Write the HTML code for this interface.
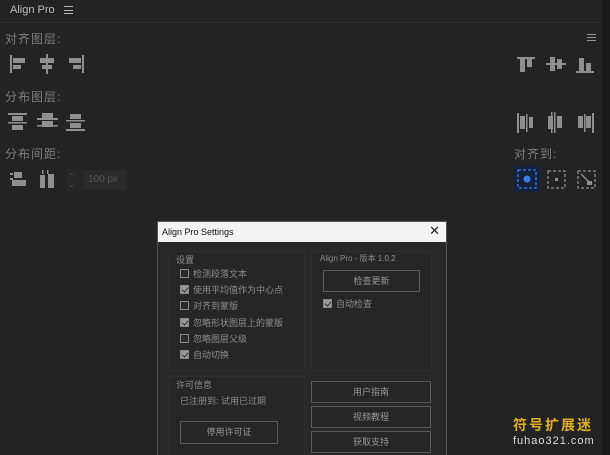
<!DOCTYPE html>
<html style="overflow:hidden;height:455px"><head><meta charset="utf-8"><style>
*{margin:0;padding:0;box-sizing:border-box}
body{width:610px;height:455px;background:#232323;position:relative;overflow:hidden;font-family:"Liberation Sans","Noto Sans CJK SC",sans-serif;color:#8a8a8a}
.a{position:absolute}
.lbl{font-size:12px;color:#7e7e7e;letter-spacing:1px}
svg{position:absolute}
.dlg{left:157px;top:221px;width:290px;height:234px;background:#282828;border:1px solid #555;border-bottom:none;overflow:hidden}
.tb{left:0;top:0;width:288px;height:20px;background:#f3f3f3;color:#111;font-size:9px;padding:5px 4px}
.pn{position:absolute;background:#262626;border:1px solid #2e2e2e}
.s{font-size:9px;color:#8d8d8d;position:absolute}
.cb{position:absolute;width:9px;height:9px;border:1px solid #888;background:#2a2a2a}
.cb.on{background:#9a9a9a}
.cb.on:after{content:"";position:absolute;left:2px;top:0px;width:3px;height:5px;border:solid #333;border-width:0 1.5px 1.5px 0;transform:rotate(40deg)}
.btn{position:absolute;border:1px solid #5a5a5a;background:#262626;font-size:9px;color:#999;text-align:center}
</style></head><body>
<div class="a" style="left:10px;top:4px;font-size:11px;color:#bdbdbd">Align Pro</div>
<div class="a" style="left:64px;top:6px;width:9px;height:8px;border-top:1.5px solid #bbb;border-bottom:1.5px solid #bbb"></div>
<div class="a" style="left:64px;top:9.5px;width:9px;height:1.5px;background:#bbb"></div>
<div class="a" style="left:0;top:22px;width:602px;height:1px;background:#2e2e2e"></div>
<div class="a" style="left:602px;top:0;width:8px;height:455px;background:#1b1b1b"></div>
<div class="a" style="left:587px;top:34px;width:9px;height:7px;border-top:1px solid #999;border-bottom:1px solid #999"></div>
<div class="a" style="left:587px;top:37px;width:9px;height:1px;background:#999"></div>

<div class="a lbl" style="left:5px;top:30px">对齐图层:</div>
<div class="a lbl" style="left:5px;top:88px">分布图层:</div>
<div class="a lbl" style="left:5px;top:145px">分布间距:</div>
<div class="a lbl" style="left:514px;top:145px">对齐到:</div>

<svg width="610" height="455" style="left:0;top:0" fill="#8f8f8f">
<rect x="10" y="55" width="2" height="18"/><rect x="13" y="58" width="12" height="5"/><rect x="13" y="65" width="8" height="4"/>
<rect x="46" y="54" width="2" height="20"/><rect x="40" y="58" width="14" height="5"/><rect x="42" y="65" width="10" height="4"/>
<rect x="82" y="55" width="2" height="18"/><rect x="69" y="58" width="12" height="5"/><rect x="73" y="65" width="8" height="4"/>
<rect x="517" y="57" width="18" height="2"/><rect x="520" y="59" width="5" height="13"/><rect x="527" y="59" width="5" height="8"/>
<rect x="546" y="63" width="20" height="2"/><rect x="550" y="57" width="5" height="14"/><rect x="557" y="59" width="5" height="10"/>
<rect x="576" y="71" width="18" height="2"/><rect x="579" y="58" width="5" height="13"/><rect x="586" y="63" width="5" height="8"/>
<rect x="8" y="113" width="19" height="2"/><rect x="12" y="116" width="11" height="5"/><rect x="8" y="122" width="19" height="1.5"/><rect x="12" y="125" width="11" height="5"/>
<rect x="37" y="118" width="21" height="2"/><rect x="42" y="113" width="11" height="5"/><rect x="42" y="121" width="11" height="6"/><rect x="37" y="125" width="21" height="1.5"/>
<rect x="70" y="114" width="11" height="5"/><rect x="66" y="120" width="19" height="1.5"/><rect x="70" y="123" width="11" height="5"/><rect x="66" y="129" width="19" height="2"/>
<rect x="517" y="113" width="2" height="20"/><rect x="520" y="116" width="5" height="13"/><rect x="526" y="114" width="1.5" height="18"/><rect x="529" y="117" width="4" height="11"/>
<rect x="548" y="116" width="5" height="13"/><rect x="554" y="112" width="1.5" height="21"/><rect x="557" y="116" width="5" height="12"/><rect x="551" y="112" width="1.5" height="21"/>
<rect x="578" y="116" width="5" height="12"/><rect x="584" y="114" width="1.5" height="18"/><rect x="586" y="116" width="5" height="12"/><rect x="592" y="113" width="2" height="20"/>
<rect x="10" y="173" width="3" height="2"/><rect x="10" y="178" width="3" height="2"/><rect x="14" y="172" width="8" height="6"/><rect x="12" y="180" width="14" height="6"/>
<rect x="40" y="175" width="5" height="13"/><rect x="48" y="174" width="6" height="14"/><rect x="42" y="170" width="1.5" height="4"/><rect x="47" y="170" width="1.5" height="4"/>
</svg>
<div class="a" style="left:66px;top:169px;width:16px;height:22px;background:#262626"></div>
<div class="a" style="left:68px;top:172px;font-size:8px;color:#555">⌃</div>
<div class="a" style="left:68px;top:180px;font-size:8px;color:#555">⌄</div>
<div class="a" style="left:83px;top:170px;width:44px;height:20px;background:#2a2a2a;font-size:10px;color:#555;padding:4px 5px">100 px</div>

<div class="a" style="left:514px;top:166px;width:26px;height:26px;background:#14213a"></div>
<svg width="610" height="455" style="left:0;top:0" fill="none" stroke-width="1.3">
<rect x="518" y="170" width="18" height="18" stroke="#3b7de8" stroke-dasharray="3 2"/><circle cx="527" cy="179" r="3.5" fill="#3b7de8" stroke="none"/>
<rect x="548" y="171" width="17" height="17" stroke="#8f8f8f" stroke-dasharray="3 2"/><rect x="555" y="178" width="3" height="3" fill="#8f8f8f" stroke="none"/>
<rect x="578" y="171" width="17" height="17" stroke="#8f8f8f" stroke-dasharray="3 2"/><path d="M581 174 L590 183" stroke="#8f8f8f"/><rect x="587" y="181" width="5" height="4" fill="#8f8f8f" stroke="none"/>
</svg>

<div class="a dlg">
 <div class="a tb">Align Pro Settings</div>
 <div class="a" style="right:6px;top:1px;font-size:13px;color:#222">✕</div>
 <div class="pn" style="left:11px;top:29px;width:136px;height:120px">
  <div class="s" style="left:6px;top:1px">设置</div>
  <div class="cb" style="left:10px;top:17px"></div><div class="s" style="left:23px;top:15px">检测段落文本</div>
  <div class="cb on" style="left:10px;top:33px"></div><div class="s" style="left:23px;top:31px">使用平均值作为中心点</div>
  <div class="cb" style="left:10px;top:49px"></div><div class="s" style="left:23px;top:47px">对齐到蒙版</div>
  <div class="cb on" style="left:10px;top:66px"></div><div class="s" style="left:23px;top:64px">忽略形状图层上的蒙版</div>
  <div class="cb" style="left:10px;top:82px"></div><div class="s" style="left:23px;top:80px">忽略图层父级</div>
  <div class="cb on" style="left:10px;top:98px"></div><div class="s" style="left:23px;top:96px">自动切换</div>
 </div>
 <div class="pn" style="left:153px;top:29px;width:121px;height:120px">
  <div class="s" style="left:8px;top:1px;font-size:8px">Align Pro - 版本 1.0.2</div>
  <div class="btn" style="left:11px;top:18px;width:97px;height:22px;line-height:20px">检查更新</div>
  <div class="cb on" style="left:11px;top:47px"></div><div class="s" style="left:24px;top:45px">自动检查</div>
 </div>
 <div class="pn" style="left:11px;top:154px;width:136px;height:90px">
  <div class="s" style="left:6px;top:1px">许可信息</div>
  <div class="s" style="left:10px;top:17px">已注册到: 试用已过期</div>
  <div class="btn" style="left:10px;top:44px;width:98px;height:23px;line-height:21px">停用许可证</div>
 </div>
 <div class="btn" style="left:153px;top:159px;width:120px;height:22px;line-height:20px">用户指南</div>
 <div class="btn" style="left:153px;top:184px;width:120px;height:22px;line-height:20px">视频教程</div>
 <div class="btn" style="left:153px;top:209px;width:120px;height:22px;line-height:20px">获取支持</div>
</div>

<div class="a" style="left:513px;top:415px;font-size:14px;color:#e0b020;letter-spacing:2px;font-weight:bold">符号扩展迷</div>
<div class="a" style="left:513px;top:435px;font-size:11px;color:#ddd;letter-spacing:1px">fuhao321.com</div>
</body></html>
